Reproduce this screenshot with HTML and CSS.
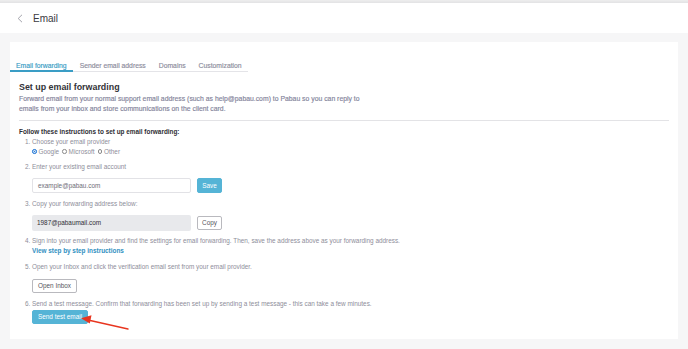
FILE: index.html
```html
<!DOCTYPE html>
<html>
<head>
<meta charset="utf-8">
<link rel="stylesheet" href="styles.css">
</head>
<body>
<div class="topstrip"></div>
<header class="header">
  <svg class="back" width="6" height="9" viewBox="0 0 6 9"><path d="M5 0.8 L1.2 4.5 L5 8.2" fill="none" stroke="#9a9aa3" stroke-width="0.9"/></svg>
  <span class="title">Email</span>
</header>
<main class="main">
  <section class="card">
    <nav class="tabs">
      <span class="tab active">Email forwarding</span>
      <span class="tab">Sender email address</span>
      <span class="tab">Domains</span>
      <span class="tab">Customization</span>
    </nav>
    <div class="content">
      <h2 class="heading">Set up email forwarding</h2>
      <p class="desc">Forward email from your normal support email address (such as help@pabau.com) to Pabau so you can reply to<br>emails from your inbox and store communications on the client card.</p>
      <hr class="rule">
      <p class="follow">Follow these instructions to set up email forwarding:</p>
      <ol class="steps">
        <li>
          <div class="line">Choose your email provider</div>
          <div class="radios">
            <span class="radio checked"></span><span>Google</span>
            <span class="radio"></span><span>Microsoft</span>
            <span class="radio"></span><span>Other</span>
          </div>
        </li>
        <li class="gap">
          <div class="line">Enter your existing email account</div>
          <div class="field-row">
            <div class="input">example@pabau.com</div>
            <span class="btn primary small">Save</span>
          </div>
        </li>
        <li class="gap">
          <div class="line">Copy your forwarding address below:</div>
          <div class="field-row">
            <div class="input filled">1987@pabaumail.com</div>
            <span class="btn outline small">Copy</span>
          </div>
        </li>
        <li class="gap5">
          <div class="line">Sign into your email provider and find the settings for email forwarding. Then, save the address above as your forwarding address.</div>
          <div class="link">View step by step instructions</div>
        </li>
        <li class="gap">
          <div class="line">Open your Inbox and click the verification email sent from your email provider.</div>
          <div class="btn-row"><span class="btn outline">Open Inbox</span></div>
        </li>
        <li class="gap">
          <div class="line">Send a test message. Confirm that forwarding has been set up by sending a test message - this can take a few minutes.</div>
          <div class="btn-row tight"><span class="btn primary">Send test email</span></div>
        </li>
      </ol>
    </div>
  </section>
</main>
<svg class="arrow" width="688" height="349" viewBox="0 0 688 349">
  <line x1="128" y1="329" x2="88" y2="320" stroke="#e8351f" stroke-width="1.3" stroke-linecap="round"/>
  <polygon points="81,318.3 91.5,315.2 89.8,323.6" fill="#e8351f"/>
</svg>
</body>
</html>
```

FILE: styles.css
```css
* { box-sizing: border-box; }
html, body { margin: 0; padding: 0; }
body {
  width: 688px;
  height: 349px;
  background: #f6f6f7;
  font-family: "Liberation Sans", Arial, Helvetica, sans-serif;
  overflow: hidden;
}
.topstrip {
  height: 3px;
  background: linear-gradient(#eeeeee, #e2e2e4);
}
.header {
  height: 30px;
  background: #fff;
  display: flex;
  align-items: center;
  padding-left: 17px;
}
.back { display: block; margin-top: 1px; }
.title {
  margin-left: 10px;
  font-size: 10px;
  color: #3a3a3f;
}
.main {
  padding: 9px 10px 10px 10px;
}
.card {
  background: #fff;
  height: 297px;
  padding-top: 19px;
}
.tabs {
  display: flex;
  width: fit-content;
  gap: 1px;
  border-bottom: 1px solid #e4e4e8;
}
.tab {
  font-size: 6.8px;
  line-height: 9px;
  padding: 0 6px;
  color: #8c8c9c;
  border-bottom: 2px solid transparent;
  margin-bottom: -1px;
  -webkit-text-stroke: 0.15px #8c8c9c;
}
.tab.active {
  color: #3a9dc5;
  border-bottom-color: #3a9dc5;
  -webkit-text-stroke: 0.15px #3a9dc5;
}
.content {
  padding: 0 9px;
}
.heading {
  margin: 9px 0 0;
  font-size: 8.9px;
  line-height: 12px;
  font-weight: 700;
  color: #333338;
}
.desc {
  margin: 1px 0 0;
  font-size: 6.85px;
  line-height: 10px;
  color: #83839a;
  -webkit-text-stroke: 0.15px #83839a;
}
.rule {
  margin: 6px 0 0;
  border: 0;
  border-top: 1px solid #e3e3e6;
  height: 0;
}
.follow {
  margin: 6px 0 0;
  font-size: 6.4px;
  line-height: 10px;
  font-weight: 700;
  color: #2e2e33;
}
.steps {
  margin: 0;
  padding-left: 13px;
  font-size: 6.4px;
  line-height: 10px;
  color: #8e8e9a;
}
.steps li.gap { margin-top: 6px; }
.steps li.gap5 { margin-top: 5px; }
.radios {
  display: flex;
  align-items: center;
  gap: 2px;
  line-height: 9px;
}
.radio {
  width: 4.5px;
  height: 4.5px;
  border-radius: 50%;
  border: 0.6px solid #8a8a8a;
  margin-left: 1px;
}
.radio:first-child { margin-left: 0; }
.radio.checked {
  background: #2f7fd8;
  border-color: #2f7fd8;
  box-shadow: inset 0 0 0 0.7px #fff;
}
.field-row {
  display: flex;
  align-items: center;
  gap: 6px;
  margin-top: 6px;
}
.input {
  width: 159px;
  height: 15px;
  border: 1px solid #e2e2e6;
  border-radius: 2px;
  padding-left: 5px;
  font-size: 6.4px;
  line-height: 13px;
  color: #6e6e78;
}
.input.filled {
  height: 16px;
  line-height: 16px;
  border: 0;
  background: #e8e9ec;
  color: #2f2f35;
}
.btn {
  display: inline-block;
  height: 14px;
  line-height: 12px;
  padding: 0 5px;
  border-radius: 2px;
  font-size: 6.4px;
  border: 1px solid transparent;
}
.btn.small { width: 25px; padding: 0; text-align: center; }
.btn.primary {
  background: #55b4d6;
  border-color: #55b4d6;
  color: #fff;
}
.field-row .btn.primary { height: 15px; line-height: 13px; }
.btn.outline {
  background: #fff;
  border-color: #b9b9be;
  color: #55555c;
}
.link {
  color: #2f8fbf;
  font-weight: 700;
}
.btn-row {
  margin-top: 7px;
  display: flex;
}
.btn-row.tight { margin-top: 1px; }
.arrow {
  position: absolute;
  left: 0;
  top: 0;
  pointer-events: none;
}
```
